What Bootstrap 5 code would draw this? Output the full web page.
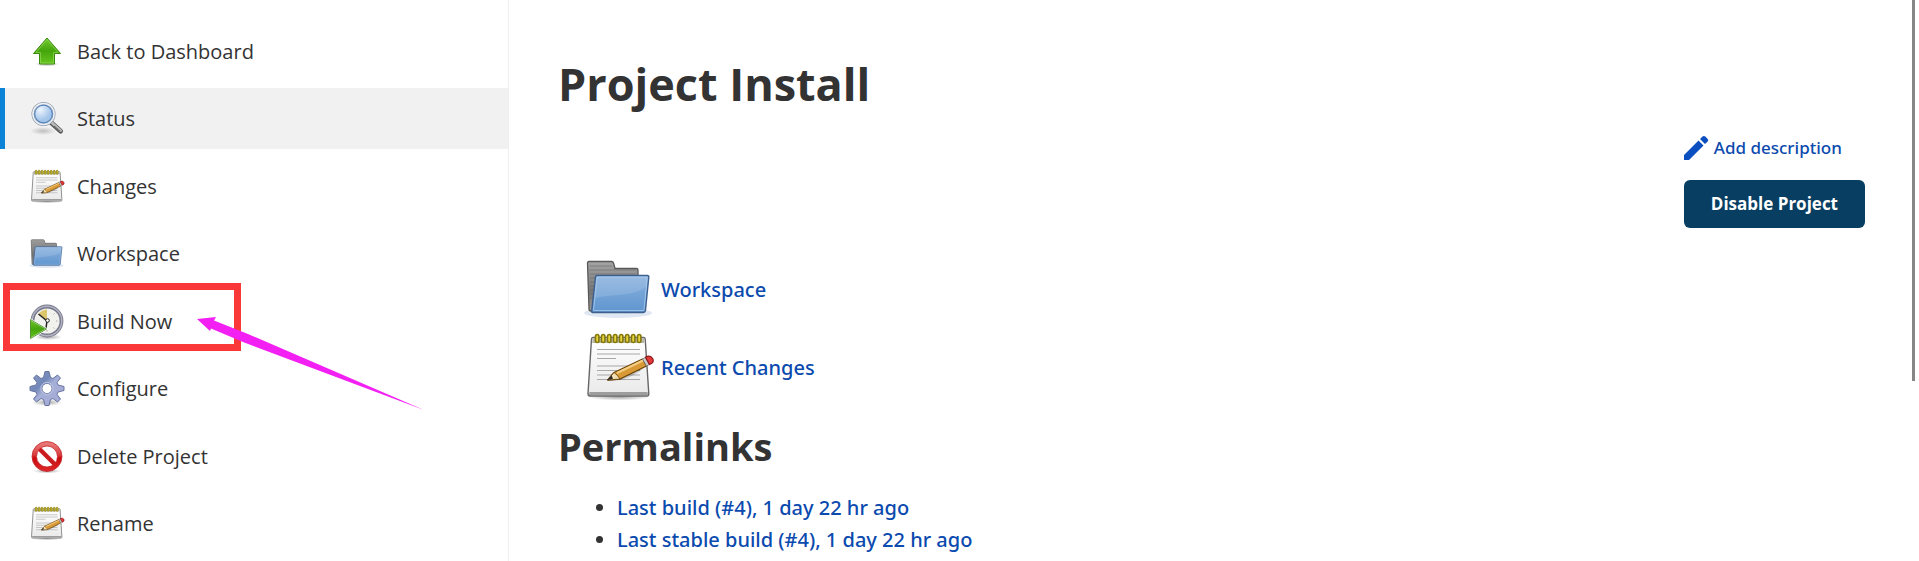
<!DOCTYPE html>
<html lang="en">
<head>
<meta charset="utf-8">
<meta name="viewport" content="width=device-width, initial-scale=1">
<title>Project Install</title>
<link href="https://cdn.jsdelivr.net/npm/bootstrap@5.3.0/dist/css/bootstrap.min.css" rel="stylesheet">
<style>
  :root { --ink: #333; --link: #0b4aae; }
  body { font-family: "Open Sans", "Noto Sans", sans-serif; font-size: 20px; line-height: 32px; color: var(--ink); background: #fff; }
  a { color: var(--link); text-decoration: none; }
  a:hover { text-decoration: underline; }
  .side-panel { width: 509px; border-right: 1px solid #f0f0f0; padding-top: 21px; }
  .task { margin-bottom: 6px; }
  .task:nth-child(even) { margin-bottom: 7px; }
  .task-link { height: 61px; padding-left: 24px; border-left: 5px solid transparent; gap: 12px; color: var(--ink); }
  .task-link.active { background: #f1f1f1; border-left-color: #0b84d8; }
  .icon-md { width: 36px; height: 36px; }
  .icon-xl { width: 72px; height: 72px; }
  .marker-box { left: 3px; top: -8px; width: 238px; height: 68px; border: 7px solid #fb3838; }
  .marker-arrow { left: 196px; top: 23px; width: 230px; height: 98px; }
  .marker-box, .marker-arrow, .scroll-thumb { pointer-events: none; }
  .main-panel { padding: 52px 54px 0 49px; }
  .main-panel h1 { font-size: 45px; line-height: 64px; font-weight: 700; }
  .main-panel h2 { font-size: 38px; line-height: 56px; font-weight: 700; }
  .main-panel a { font-family: "Noto Sans", "Open Sans", sans-serif; font-weight: 500; }
  .actions { gap: 16px; font-size: 17px; }
  .btn-project { --bs-btn-color: #fff; --bs-btn-bg: #073e61; --bs-btn-hover-color: #fff; --bs-btn-hover-bg: #0a4f7b; --bs-btn-font-weight: 700; --bs-btn-font-size: 17px; --bs-btn-padding-x: 27px; --bs-btn-border-width: 0; --bs-btn-border-radius: 6px; height: 48px; }
  .shortcuts { margin: 26px 0 14px 25px; gap: 6px; }
  .shortcuts a { gap: 6px; }
  .permalinks { padding-left: 59px; margin-top: 18px; }
  .scroll-thumb { right: 4px; top: 0; width: 3px; height: 68vh; background: #868686; }
</style>
</head>
<body>
<svg width="0" height="0" class="position-absolute" aria-hidden="true">
  <defs>
    <linearGradient id="gGreen" x2="0" y2="1"><stop stop-color="#72c92c"/><stop offset=".5" stop-color="#45a50c"/><stop offset="1" stop-color="#66c51f"/></linearGradient>
    <linearGradient id="gBlue" x2="0" y2="1"><stop stop-color="#8ab2de"/><stop offset="1" stop-color="#5f95cf"/></linearGradient>
    <linearGradient id="gGray" x2="0" y2="1"><stop stop-color="#a5a5a5"/><stop offset=".6" stop-color="#777"/><stop offset="1" stop-color="#999"/></linearGradient>
    <linearGradient id="gPaper" x2="0" y2="1"><stop stop-color="#fff"/><stop offset="1" stop-color="#e9e9e9"/></linearGradient>
    <linearGradient id="gRed" x2="0" y2="1"><stop stop-color="#ea8080"/><stop offset=".45" stop-color="#dc3d40"/><stop offset=".55" stop-color="#c9090d"/><stop offset="1" stop-color="#df292c"/></linearGradient>
    <linearGradient id="gGear" x2="1" y2="1"><stop stop-color="#8d9bc8"/><stop offset=".35" stop-color="#7288b8"/><stop offset=".5" stop-color="#a5afd8"/><stop offset="1" stop-color="#a7a9d3"/></linearGradient>
    <radialGradient id="gLens" cx=".35" cy=".3"><stop stop-color="#eef5fd"/><stop offset="1" stop-color="#a4c5ea"/></radialGradient>
    <radialGradient id="gShade"><stop stop-color="#000" stop-opacity=".35"/><stop offset="1" stop-color="#000" stop-opacity="0"/></radialGradient>
  </defs>
  <symbol id="folder" viewBox="0 0 72 72">
    <ellipse cx="35" cy="59" rx="34" ry="5" fill="#7f9fd0" opacity=".25"/>
    <path d="M4.500 9Q4.500 7.500 6 7.500H28.500Q30 7.500 30.500 9L32 14.500H53.500Q55 14.500 55 16V57H8Q6 57 6 55Z" fill="url(#gGray)" stroke="#585858" stroke-width="1.300"/>
    <path d="M6.500 12H29M6.500 16H53M7 20H53M7 24H12M7 28H12M7 32H11M7 36H11M7 40H10M7 44H10" stroke="#5f5f5f" stroke-width=".8" opacity=".6"/>
    <path d="M14 21.500H64.500Q66 21.500 65.800 23L62.500 56Q62 58.500 60 58.500H9.500Q8.500 58.500 8.700 57L12.500 23Q12.700 21.500 14 21.500Z" fill="url(#gBlue)" stroke="#3c5f8e" stroke-width="1.400"/>
    <path d="M14 23H64.300L63.500 32C54 42 30 40 11.800 44Z" fill="#fff" opacity=".13"/>
    <path d="M10.500 56.500L14 23H64.200L61 56.500Z" fill="none" stroke="#b4d2f0" stroke-width="1" opacity=".7"/>
  </symbol>
  <symbol id="notepad" viewBox="0 0 72 72">
    <ellipse cx="36" cy="65" rx="32" ry="3.500" fill="url(#gShade)"/>
    <path d="M10 5.500H60.500Q62 5.500 62.200 7L65.800 61.500Q66 64 64 64H7Q5 64 5 61.500L8.500 7Q8.700 5.500 10 5.500Z" fill="url(#gPaper)" stroke="#666" stroke-width="1.400"/>
    <path d="M9.500 6.500H61V11H9.300Z" fill="#b6b6a8"/>
    <path d="M6.500 60H64.500L65 63H6Z" fill="#9d9d9d"/>
    <path d="M14 17.500H57M14 22H57M14 26.500H33M14 34H57M14 38.500H57M14 43H57M14 47.500H57" stroke="#a8a8a8" stroke-width="1.200"/>
    <g fill="#e6d640" stroke="#857808" stroke-width="1.600"><rect x="12.500" y="2.500" width="3.400" height="8" rx="1.700"/><rect x="18.500" y="2.500" width="3.400" height="8" rx="1.700"/><rect x="24.500" y="2.500" width="3.400" height="8" rx="1.700"/><rect x="30.500" y="2.500" width="3.400" height="8" rx="1.700"/><rect x="36.500" y="2.500" width="3.400" height="8" rx="1.700"/><rect x="42.500" y="2.500" width="3.400" height="8" rx="1.700"/><rect x="48.500" y="2.500" width="3.400" height="8" rx="1.700"/><rect x="54.500" y="2.500" width="3.400" height="8" rx="1.700"/></g>
    <path d="M26 49Q43 50 60 37L45 40Z" fill="#000" opacity=".18"/>
    <path d="M24.700 48L31 40.500 59.500 27 63.500 34 37 47Z" fill="#d99a35" stroke="#6a4308" stroke-width="1.300" stroke-linejoin="round"/>
    <path d="M34 41L60 28.500" stroke="#f3cd82" stroke-width="2"/>
    <path d="M24.700 48L31 40.500 34 43 37 47Z" fill="#f2dfb5" stroke="#6a4308" stroke-width=".8"/>
    <path d="M24.200 48.300L28.500 43.500 30 46.700Z" fill="#292929"/>
    <path d="M59.500 27L63.500 34 66.500 32.500 62.500 25.300Z" fill="#c9c9c9" stroke="#777" stroke-width=".8"/>
    <path d="M62.500 25.300Q67 22.500 69.700 26.500 72 30.500 66.500 32.500Z" fill="#e23a3a" stroke="#8c1414" stroke-width="1.200"/>
  </symbol>
</svg>

<div class="d-flex min-vh-100">
  <nav class="side-panel flex-shrink-0" aria-label="Project tasks">
    <ul class="list-unstyled m-0">
      <li class="task"><a href="#" class="task-link d-flex align-items-center">
        <svg class="icon-md" viewBox="0 0 36 36" aria-hidden="true"><ellipse cx="18" cy="30" rx="12" ry="2.500" fill="url(#gShade)"/><path d="M18 4L31.500 19.500H25.500V30H10.500V19.500H4.500Z" fill="url(#gGreen)" stroke="#3b8a10" stroke-linejoin="round"/><path d="M18 5.500L29 18.500H24.500V29H11.500V18.500H7Z" fill="none" stroke="#a2e26a" stroke-width=".8" opacity=".7"/></svg>
        Back to Dashboard</a></li>
      <li class="task"><a href="#" class="task-link active d-flex align-items-center" aria-current="page">
        <svg class="icon-md" viewBox="0 0 36 36" aria-hidden="true"><ellipse cx="14" cy="30" rx="13" ry="4" fill="url(#gShade)" opacity=".6"/><path d="M22 21.500L31.500 30" stroke="#555" stroke-width="5" stroke-linecap="round"/><path d="M22 21L31.500 29.500" stroke="#bbb" stroke-width="3" stroke-linecap="round"/><path d="M25 25L31 30.500" stroke="#6c6c6c" stroke-width="1.300"/><circle cx="14.500" cy="13" r="10.600" fill="url(#gLens)" stroke="#8e9bad" stroke-width="2.800"/><circle cx="14.500" cy="13" r="10.600" fill="none" stroke="#eef1f5" stroke-width="1.500"/><circle cx="14.500" cy="13" r="8.800" fill="none" stroke="#4a7ab8" stroke-width="1"/></svg>
        Status</a></li>
      <li class="task"><a href="#" class="task-link d-flex align-items-center"><svg class="icon-md" aria-hidden="true"><use href="#notepad"/></svg>Changes</a></li>
      <li class="task"><a href="#" class="task-link d-flex align-items-center"><svg class="icon-md" aria-hidden="true"><use href="#folder"/></svg>Workspace</a></li>
      <li class="task position-relative"><a href="#" class="task-link d-flex align-items-center">
        <svg class="icon-md" viewBox="0 0 36 36" aria-hidden="true"><ellipse cx="19" cy="33" rx="14" ry="3" fill="url(#gShade)"/><circle cx="18" cy="17" r="14.500" fill="#f1f1ee" stroke="#77788a" stroke-width="3.800"/><circle cx="18" cy="17" r="14.800" fill="none" stroke="#b2b3c3" stroke-width="1.500"/><path d="M18 17L9.500 10A11.500 11.500 0 0 1 18 5.500Z" fill="#dcc66b"/><path d="M18 17L9.500 10M18 17L17 24" stroke="#222" stroke-width="1.500"/><circle cx="18.500" cy="16.500" r="1.800" fill="#fff" stroke="#222"/><path d="M28.500 17H27M18 27.500V26M25.500 9.500L24.500 10.500M25.500 24.500L24.500 23.500" stroke="#aaa"/><path d="M1 15L18 25 1 35Z" fill="url(#gGreen)" stroke="#fff" stroke-width="1.600"/><path d="M1.500 15.500L17.500 25 1.500 34.500Z" fill="none" stroke="#347d0d" stroke-width=".8"/></svg>
        Build Now</a>
        <span class="marker-box position-absolute" aria-hidden="true"></span>
        <svg class="marker-arrow position-absolute z-1" viewBox="0 0 230 98" aria-hidden="true"><path d="M1 5L20 3 18 6.500 52 20 228 96 47 28 15 14.500 14 17Z" fill="#f320f3"/></svg>
      </li>
      <li class="task"><a href="#" class="task-link d-flex align-items-center">
        <svg class="icon-md" viewBox="-18 -17.500 36 36" aria-hidden="true"><ellipse cy="14" rx="15" ry="3.500" fill="url(#gShade)"/><path fill-rule="evenodd" d="M-2 -17H2L3.500 -11L6 -10L10.500 -13.500L13.500 -10.500L10 -6L11 -3.500L17 -2V2L11 3.500L10 6L13.500 10.500L10.500 13.500L6 10L3.500 11L2 17H-2L-3.500 11L-6 10L-10.500 13.500L-13.500 10.500L-10 6L-11 3.500L-17 2V-2L-11 -3.500L-10 -6L-13.500 -10.500L-10.500 -13.500L-6 -10L-3.500 -11ZM0 -4.700A4.700 4.700 0 1 0 0 4.700A4.700 4.700 0 1 0 0 -4.700Z" fill="url(#gGear)" stroke="#66739f" stroke-linejoin="round"/><circle r="4.500" fill="#fff"/><circle r="6.200" fill="none" stroke="#bcc3e0" stroke-width="1"/></svg>
        Configure</a></li>
      <li class="task"><a href="#" class="task-link d-flex align-items-center">
        <svg class="icon-md" viewBox="0 0 36 36" aria-hidden="true"><ellipse cx="18" cy="32" rx="14" ry="2.500" fill="url(#gShade)"/><circle cx="18" cy="17.500" r="12.400" fill="#fff"/><path d="M9.500 9L26.500 26" stroke="#cb1b1f" stroke-width="4.500"/><path d="M18 2.500A15 15 0 1 0 18 32.500A15 15 0 1 0 18 2.500ZM18 7A10.500 10.500 0 1 1 18 28A10.500 10.500 0 1 1 18 7Z" fill="url(#gRed)" fill-rule="evenodd" stroke="#c4282b" stroke-width=".8"/></svg>
        Delete Project</a></li>
      <li class="task m-0"><a href="#" class="task-link d-flex align-items-center"><svg class="icon-md" aria-hidden="true"><use href="#notepad"/></svg>Rename</a></li>
    </ul>
  </nav>

  <main class="main-panel flex-grow-1">
    <h1 class="mb-3">Project Install</h1>
    <div class="d-flex justify-content-end">
      <div class="actions d-flex flex-column">
        <a href="#" class="d-flex align-items-center gap-1">
          <svg width="26" height="26" viewBox="0 0 26 26" aria-hidden="true"><path d="M0 25V20L14.500 5.500 19.500 10.500 5 25ZM16 4L18.500 1.500Q20 .3 21.300 1.500L23.700 4Q24.700 5.200 23.700 6.500L21 9Z" fill="#0b4ec0"/></svg>
          Add description</a>
        <button type="button" class="btn btn-project">Disable Project</button>
      </div>
    </div>
    <div class="shortcuts d-flex flex-column align-items-start">
      <a href="#" class="d-flex align-items-center"><svg class="icon-xl" aria-hidden="true"><use href="#folder"/></svg>Workspace</a>
      <a href="#" class="d-flex align-items-center"><svg class="icon-xl" aria-hidden="true"><use href="#notepad"/></svg>Recent Changes</a>
    </div>
    <h2 class="mb-0">Permalinks</h2>
    <ul class="permalinks mb-0">
      <li><a href="#">Last build (#4), 1 day 22 hr ago</a></li>
      <li><a href="#">Last stable build (#4), 1 day 22 hr ago</a></li>
    </ul>
  </main>
</div>
<div class="scroll-thumb position-fixed" aria-hidden="true"></div>
<script src="https://cdn.jsdelivr.net/npm/bootstrap@5.3.0/dist/js/bootstrap.bundle.min.js"></script>
</body>
</html>
